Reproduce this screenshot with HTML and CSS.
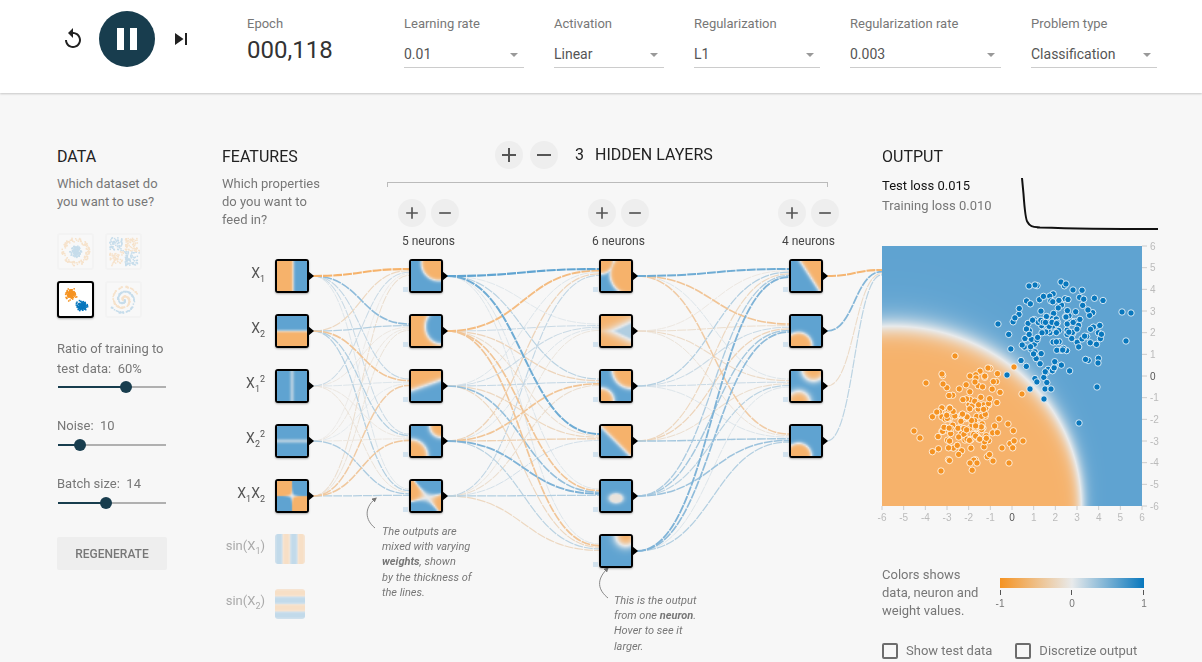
FILE: index.html
```html
<!DOCTYPE html>
<html lang="en">
  <head>
    <title>Neural Network Playground</title>
    <meta charset="UTF-8" />
    <link rel="stylesheet" href="styles.css">
  </head>
  <body>
    <header class="top-bar">
      <div class="player">
        <svg class="player-icon" viewBox="0 0 24 24"><path d="M12 5V1L7 6l5 5V7c3.31 0 6 2.69 6 6s-2.69 6-6 6-6-2.69-6-6H4c0 4.42 3.58 8 8 8s8-3.58 8-8-3.58-8-8-8z"/></svg>
        <div class="play-btn"><span class="pause-bar"></span><span class="pause-bar"></span></div>
        <svg class="player-icon" viewBox="0 0 24 24"><path d="M6 18l8.5-6L6 6v12zM16 6v12h2V6h-2z"/></svg>
      </div>
      <div class="epoch">
        <div class="epoch-label">Epoch</div>
        <div class="epoch-value">000,118</div>
      </div>
      <div class="selects">
        <div class="select select-lr"><label>Learning rate</label><div class="select-value">0.01</div></div>
        <div class="select select-act"><label>Activation</label><div class="select-value">Linear</div></div>
        <div class="select select-reg"><label>Regularization</label><div class="select-value">L1</div></div>
        <div class="select select-rate"><label>Regularization rate</label><div class="select-value">0.003</div></div>
        <div class="select select-reg"><label>Problem type</label><div class="select-value">Classification</div></div>
      </div>
    </header>

    <main class="main">
      <section class="col-data">
        <h4>DATA</h4>
        <p class="hint">Which dataset do<br>you want to use?</p>
        <div class="datasets">
          <canvas class="thumb" id="thumb-circle" width="33" height="33"></canvas>
          <canvas class="thumb" id="thumb-xor" width="33" height="33"></canvas>
          <canvas class="thumb selected" id="thumb-gauss" width="33" height="33"></canvas>
          <canvas class="thumb" id="thumb-spiral" width="33" height="33"></canvas>
        </div>
        <div class="slider-label slider-label-first">Ratio of training to<br>test data:&nbsp; 60%</div>
        <div class="slider"><div class="slider-fill" style="width: 63%"></div></div>
        <div class="slider-label">Noise:&nbsp; 10</div>
        <div class="slider"><div class="slider-fill" style="width: 20%"></div></div>
        <div class="slider-label">Batch size:&nbsp; 14</div>
        <div class="slider"><div class="slider-fill" style="width: 44%"></div></div>
        <button type="button" class="regenerate">REGENERATE</button>
      </section>

      <section class="col-network">
        <div class="net-top">
          <div class="features-intro">
            <h4>FEATURES</h4>
            <p class="hint">Which properties<br>do you want to<br>feed in?</p>
          </div>
          <div class="hidden-top">
            <div class="hidden-title">
              <div class="round-btn"><svg class="icon-big" viewBox="0 0 24 24"><path d="M19 13h-6v6h-2v-6H5v-2h6V5h2v6h6v2z"/></svg></div>
              <div class="round-btn"><svg class="icon-big" viewBox="0 0 24 24"><path d="M19 13H5v-2h14v2z"/></svg></div>
              <h4 class="layers-count">3</h4>
              <h4>HIDDEN LAYERS</h4>
            </div>
            <div class="bracket"></div>
            <div class="layer-heads">
              <div class="layer-head">
                <div class="layer-btns">
                  <div class="round-btn"><svg class="icon-small" viewBox="0 0 24 24"><path d="M19 13h-6v6h-2v-6H5v-2h6V5h2v6h6v2z"/></svg></div>
                  <div class="round-btn"><svg class="icon-small" viewBox="0 0 24 24"><path d="M19 13H5v-2h14v2z"/></svg></div>
                </div>
                <div class="neuron-count">5 neurons</div>
              </div>
              <div class="layer-head">
                <div class="layer-btns">
                  <div class="round-btn"><svg class="icon-small" viewBox="0 0 24 24"><path d="M19 13h-6v6h-2v-6H5v-2h6V5h2v6h6v2z"/></svg></div>
                  <div class="round-btn"><svg class="icon-small" viewBox="0 0 24 24"><path d="M19 13H5v-2h14v2z"/></svg></div>
                </div>
                <div class="neuron-count">6 neurons</div>
              </div>
              <div class="layer-head">
                <div class="layer-btns">
                  <div class="round-btn"><svg class="icon-small" viewBox="0 0 24 24"><path d="M19 13h-6v6h-2v-6H5v-2h6V5h2v6h6v2z"/></svg></div>
                  <div class="round-btn"><svg class="icon-small" viewBox="0 0 24 24"><path d="M19 13H5v-2h14v2z"/></svg></div>
                </div>
                <div class="neuron-count">4 neurons</div>
              </div>
            </div>
          </div>
        </div>
        <div class="diagram" id="diagram">
          <svg class="links" id="links" width="660" height="416">
            <defs>
              <marker id="arrow-head" markerWidth="5" markerHeight="5" refX="2.500" refY="2.500" orient="auto"><path d="M0 0L5 2.500L0 5z" fill="#777"/></marker>
            </defs>
          </svg>
          <svg class="links" width="660" height="416">
            <path class="callout-arrow" d="M153 282C143 274 142 262 153 253"/>
            <path class="callout-arrow" d="M386 352C376 344 374 334 385 323"/>
          </svg>
          <div class="callout callout-weights">The outputs are<br>mixed with varying<br><b>weights</b>, shown<br>by the thickness of<br>the lines.</div>
          <div class="callout callout-neuron">This is the output<br>from one <b>neuron</b>.<br>Hover to see it<br>larger.</div>
        </div>
      </section>

      <section class="col-output">
        <h4>OUTPUT</h4>
        <div class="loss-row">
          <div class="loss-text">
            <div class="loss-test">Test loss 0.015</div>
            <div class="loss-train">Training loss 0.010</div>
          </div>
          <svg class="loss-chart" width="138" height="70"><path d="M2 2L3.500 18C4.500 32 5.500 44 7.500 46C9.500 50 12 51 20 51.500C50 52.500 90 53 138 53" fill="none" stroke="#111" stroke-width="2"/></svg>
        </div>
        <div class="plot">
          <canvas id="heatmap" width="260" height="260"></canvas>
          <svg class="plot-overlay" id="plot-overlay" width="300" height="290"></svg>
        </div>
        <div class="legend">
          <div class="legend-text">Colors shows<br>data, neuron and<br>weight values.</div>
          <svg class="legend-scale" width="168" height="54">
            <defs>
              <linearGradient id="scale-gradient">
                <stop offset="0" stop-color="#f59322"/>
                <stop offset="0.5" stop-color="#e8eaeb"/>
                <stop offset="1" stop-color="#0877bd"/>
              </linearGradient>
            </defs>
            <rect x="8" y="13" width="144" height="10" fill="url(#scale-gradient)"/>
            <path d="M8.500 25v5M79.500 25v5M151.500 25v5" stroke="#555"/>
            <text x="8" y="42" text-anchor="middle">-1</text>
            <text x="80" y="42" text-anchor="middle">0</text>
            <text x="152" y="42" text-anchor="middle">1</text>
          </svg>
        </div>
        <div class="checks">
          <label class="check"><span class="check-box"></span>Show test data</label>
          <label class="check"><span class="check-box"></span>Discretize output</label>
        </div>
      </section>
    </main>
    <script src="script.js"></script>
  </body>
</html>
```

FILE: styles.css
```css
* {
  box-sizing: border-box;
}

html, body {
  margin: 0;
  height: 100%;
  overflow: hidden;
}

body {
  font-family: Roboto, "Liberation Sans", sans-serif;
  background-color: #f7f7f7;
  color: #777;
  font-size: 13px;
}

h4 {
  margin: 0;
  font-size: 16px;
  font-weight: 400;
  line-height: 22px;
  color: #222;
}

.hint {
  margin: 7px 0 0;
  line-height: 18px;
  font-size: 13px;
  color: #777;
}

/* top bar */
.top-bar {
  display: flex;
  height: 93px;
  padding-left: 61px;
  background-color: white;
  box-shadow: 0 1px 2px rgba(0, 0, 0, 0.2);
}

.player {
  display: flex;
  align-items: flex-start;
  gap: 14px;
  padding-top: 11px;
}

.player-icon {
  width: 24px;
  height: 24px;
  margin-top: 16px;
  fill: #212121;
}

.play-btn {
  display: flex;
  justify-content: center;
  align-items: center;
  gap: 6px;
  width: 56px;
  height: 56px;
  border-radius: 50%;
  background-color: #183d4e;
}

.pause-bar {
  width: 7px;
  height: 22px;
  background-color: white;
}

.epoch {
  width: 157px;
  margin-left: 54px;
  padding-top: 16px;
}

.epoch-label {
  font-size: 13px;
  line-height: 16px;
}

.epoch-value {
  margin-top: 3px;
  font-size: 24px;
  line-height: 30px;
  color: #333;
}

.selects {
  display: flex;
  gap: 30px;
  padding-top: 16px;
}

.select {
  width: 126px;
}

.select-lr {
  width: 120px;
}

.select-act {
  width: 110px;
}

.select-rate {
  width: 151px;
}

.select label {
  display: block;
  font-size: 13px;
  line-height: 16px;
}

.select-value {
  position: relative;
  height: 29px;
  margin-top: 7px;
  border-bottom: 1px solid #ccc;
  font-size: 14px;
  line-height: 30px;
  color: #555;
}

.select-value::after {
  content: "";
  position: absolute;
  right: 6px;
  top: 14px;
  border-top: 4px solid #999;
  border-left: 4px solid transparent;
  border-right: 4px solid transparent;
}

/* columns */
.main {
  display: flex;
  padding: 53px 0 0 57px;
}

.col-data {
  width: 165px;
}

.datasets {
  display: grid;
  grid-template-columns: 37px 37px;
  gap: 11px;
  margin-top: 22px;
}

.thumb {
  width: 37px;
  height: 37px;
  border: 2px solid #e6e6e6;
  border-radius: 3px;
  background-color: white;
  opacity: 0.2;
}

.thumb.selected {
  border: 2.5px solid black;
  opacity: 1;
  box-shadow: 0 1px 2px rgba(0, 0, 0, 0.3);
}

.slider-label {
  line-height: 20px;
}

.slider-label-first {
  margin-top: 21px;
  margin-bottom: -1px;
}

.slider {
  position: relative;
  width: 108px;
  height: 2px;
  margin: 8px 0 28px 1px;
  background-color: #b0b0b0;
}

.slider-fill {
  position: relative;
  height: 2px;
  background-color: #183d4e;
}

.slider-fill::after {
  content: "";
  position: absolute;
  right: -6px;
  top: -5px;
  width: 12px;
  height: 12px;
  border-radius: 50%;
  background-color: #183d4e;
}

.regenerate {
  display: block;
  width: 110px;
  height: 33px;
  margin-top: 33px;
  border: 0;
  border-radius: 2px;
  background-color: #eee;
  font-family: inherit;
  font-size: 12px;
  font-weight: 500;
  color: #777;
}

.col-network {
  width: 660px;
}

.net-top {
  display: flex;
  height: 100px;
}

.features-intro {
  width: 165px;
}

.hidden-top {
  width: 495px;
  margin-top: -5px;
}

.hidden-title {
  display: flex;
  align-items: center;
  gap: 7px;
  padding-left: 108px;
}

.layers-count {
  margin: 0 4px 0 10px;
}

.round-btn {
  display: flex;
  justify-content: center;
  align-items: center;
  width: 28px;
  height: 28px;
  border-radius: 50%;
  background-color: #eee;
  fill: #555;
}

.icon-big {
  width: 24px;
  height: 24px;
}

.icon-small {
  width: 20px;
  height: 20px;
}

.bracket {
  width: 441px;
  height: 5px;
  margin-top: 13px;
  border: 1px solid #bbb;
  border-bottom: 0;
}

.layer-heads {
  display: flex;
  margin-top: 12px;
  padding-left: 11px;
}

.layer-head {
  flex: 0 0 190px;
}

.layer-btns {
  display: flex;
  gap: 5px;
}

.neuron-count {
  margin: 7px 0 0 4px;
  font-size: 12px;
  line-height: 14px;
  color: #444;
}

/* network diagram */
.diagram {
  position: relative;
  height: 416px;
}

.links {
  position: absolute;
  left: 0;
  top: 0;
  overflow: visible;
}

.callout-arrow {
  fill: none;
  stroke: #888;
  stroke-width: 1;
  marker-end: url(#arrow-head);
}

.node {
  position: absolute;
  width: 34px;
  height: 34px;
  border: 2px solid black;
  border-radius: 3px;
  background-color: white;
  box-shadow: 0 1px 2px rgba(0, 0, 0, 0.3);
}

.node canvas {
  display: block;
  width: 30px;
  height: 30px;
  border-radius: 1px;
}

.node::after {
  content: "";
  position: absolute;
  left: 31px;
  top: 10px;
  border-left: 6px solid black;
  border-top: 5px solid transparent;
  border-bottom: 5px solid transparent;
}

.node.off {
  width: 30px;
  height: 30px;
  border: 0;
  box-shadow: none;
  background-color: transparent;
}

.node.off::after {
  display: none;
}

.node.off canvas {
  border-radius: 3px;
  opacity: 0.35;
}

.node-label {
  position: absolute;
  right: 100%;
  top: 2px;
  margin-right: 12px;
  white-space: nowrap;
  font-size: 14px;
  line-height: 20px;
  color: #555;
}

.node.off .node-label {
  top: 2px;
  right: 30px;
  margin-right: 10px;
  font-size: 13px;
  color: #aaa;
}

.node-label sub,
.node-label sup {
  font-size: 9px;
  line-height: 0;
}

.bias {
  position: absolute;
  left: -8px;
  top: 26px;
  width: 5px;
  height: 5px;
  background-color: #d2e2ee;
}

.callout {
  position: absolute;
  font-size: 11px;
  font-style: italic;
  line-height: 15.200px;
  white-space: nowrap;
  color: #777;
}

.callout b {
  font-weight: 700;
}

.callout-weights {
  left: 160px;
  top: 278px;
}

.callout-neuron {
  left: 392px;
  top: 347px;
}

/* output */
.col-output {
  width: 320px;
}

.loss-row {
  display: flex;
  justify-content: space-between;
  width: 276px;
  height: 70px;
  margin-top: 8px;
}

.loss-text {
  font-size: 13px;
  line-height: 20px;
}

.loss-test {
  color: #111;
}

.loss-chart {
  display: block;
}

.plot {
  position: relative;
  width: 260px;
  height: 260px;
}

#heatmap {
  display: block;
}

.plot-overlay {
  position: absolute;
  left: 0;
  top: 0;
  overflow: visible;
}

.plot-overlay text {
  font-family: "Liberation Sans", sans-serif;
  font-size: 10px;
  fill: #bbb;
}

.plot-overlay text.zero {
  fill: #555;
}

.legend {
  display: flex;
  margin-top: 60px;
}

.legend-text {
  width: 110px;
  font-size: 13px;
  line-height: 18px;
}

.legend-scale {
  margin-top: -1px;
}

.legend-scale text {
  font-family: "Liberation Sans", sans-serif;
  font-size: 10px;
  fill: #777;
}

.checks {
  display: flex;
  gap: 23px;
  margin-top: 22px;
}

.check {
  display: flex;
  align-items: center;
  gap: 8px;
  font-size: 13px;
  line-height: 18px;
}

.check-box {
  width: 16px;
  height: 16px;
  border: 2px solid #6d6d6d;
  border-radius: 2px;
}
```

FILE: script.js
```js
var PALE = [232, 234, 235];
var ORANGE = [246, 178, 107];
var BLUE = [95, 163, 209];
var SVG_NS = 'http://www.w3.org/2000/svg';

var seed = 7;
function rnd() {
  seed = (seed * 16807) % 2147483647;
  return seed / 2147483647;
}
function gauss() {
  return Math.sqrt(-2 * Math.log(rnd())) * Math.cos(2 * Math.PI * rnd());
}

function scaleColor(t) {
  var end = t < 0 ? ORANGE : BLUE;
  var a = Math.min(1, Math.abs(t));
  return [0, 1, 2].map(function (i) {
    return Math.round(PALE[i] + (end[i] - PALE[i]) * a);
  });
}

// blue outside the blobs, orange inside
function blobs(list, k) {
  return function (x, y) {
    var d = 9;
    list.forEach(function (b) {
      d = Math.min(d, Math.hypot(x - b[0], y - b[1]) - b[2]);
    });
    return Math.tanh(k * d);
  };
}

function drawHeat(canvas, fn) {
  var ctx = canvas.getContext('2d');
  var w = canvas.width, h = canvas.height;
  var img = ctx.createImageData(w, h);
  for (var j = 0; j < h; j++) {
    for (var i = 0; i < w; i++) {
      var x = (i + 0.5) / w * 2 - 1;
      var y = 1 - (j + 0.5) / h * 2;
      var c = scaleColor(fn(x, y));
      var p = (j * w + i) * 4;
      img.data[p] = c[0];
      img.data[p + 1] = c[1];
      img.data[p + 2] = c[2];
      img.data[p + 3] = 255;
    }
  }
  ctx.putImageData(img, 0, 0);
}

var inputs = [
  { label: 'X<sub>1</sub>', fn: function (x, y) { return Math.tanh(12 * (x - 0.08)); } },
  { label: 'X<sub>2</sub>', fn: function (x, y) { return Math.tanh(12 * y); } },
  { label: 'X<sub>1</sub><sup>2</sup>', fn: function (x, y) { return 0.4 + 0.6 * Math.tanh(40 * x * x); } },
  { label: 'X<sub>2</sub><sup>2</sup>', fn: function (x, y) { return 0.4 + 0.6 * Math.tanh(40 * y * y); } },
  { label: 'X<sub>1</sub>X<sub>2</sub>', fn: function (x, y) { return Math.tanh(60 * x * y); } },
  { label: 'sin(X<sub>1</sub>)', off: true, fn: function (x, y) { return Math.tanh(3 * Math.sin(2 * Math.PI * x)); } },
  { label: 'sin(X<sub>2</sub>)', off: true, fn: function (x, y) { return Math.tanh(3 * Math.sin(2 * Math.PI * y)); } }
];

var hidden = [
  [
    blobs([[0.85, 0.85, 1.15]], 8),
    function (x, y) { return -Math.tanh(7 * (Math.hypot(x - 1, (y - 0.3) * 0.9) - 1.05)); },
    function (x, y) { return Math.tanh(5 * (0.35 * x - y + 0.05)); },
    blobs([[1, 1, 0.75], [-1, -1, 1.1]], 6),
    function (x, y) {
      var a = (x - 0.1) + 0.8 * (y + 0.1);
      var b = (y + 0.1) - 0.25 * (x - 0.1);
      return Math.tanh(9 * a * b);
    }
  ],
  [
    blobs([[-1, 1, 0.85], [1, 0.15, 1.4]], 7),
    function (x, y) { return Math.min(0.4, -Math.tanh(1.5 * (1.5 * Math.abs(y) - 0.7 * (x + 0.3)))); },
    blobs([[1, 1.1, 1.25], [-1, -1, 0.85]], 6),
    function (x, y) { return Math.tanh(-5 * (x + y + 0.05)); },
    function (x, y) { return Math.max(-0.12, Math.tanh(2.5 * (Math.hypot(x / 0.5, (y + 0.15) / 0.35) - 0.8))); },
    blobs([[0.65, 1, 0.65]], 3)
  ],
  [
    function (x, y) { return Math.tanh(-6 * (x + 0.65 * y - 0.25)); },
    blobs([[-0.5, -1, 0.9]], 7),
    blobs([[0.5, 1.1, 0.75], [-0.5, -1.1, 0.75]], 4),
    blobs([[-0.5, -1, 0.85]], 7)
  ]
];

// positive is blue, negative is orange
var weights = [
  [
    [-0.9, 0.6, 0.25, 0.2, 0.1],
    [-0.3, 0.35, -0.6, 0.35, 0.35],
    [0.2, -0.1, 0.1, -0.1, -0.15],
    [-0.05, -0.1, 0.05, -0.1, 0.4],
    [-0.2, -0.15, -0.5, -0.55, 0.35]
  ],
  [
    [0.9, 0.08, 0.3, 0.8, 0.1, 0.1],
    [-0.75, 0.2, -0.35, -0.2, -0.6, -0.6],
    [0.1, 0.2, 0.25, -0.3, 0.55, -0.3],
    [-0.35, 0.1, -0.6, -0.4, 0.7, 0.3],
    [0.25, -0.12, -0.2, 0.15, 0.35, -0.3]
  ],
  [
    [0.8, -0.6, 0.1, -0.5],
    [-0.1, -0.2, -0.25, -0.15],
    [0.35, 0.2, 0.2, 0.1],
    [-0.3, -0.35, -0.2, 0.45],
    [0.4, 0.45, 0.3, 0.5],
    [0.7, 0.6, 0.1, 0.35]
  ],
  [[-0.85], [0.65], [-0.25], [0.3]]
];

var diagram = document.getElementById('diagram');
var links = document.getElementById('links');
var columnX = [53, 187, 377, 567];
var ROW = 55, TOP = 13;

function addNode(colIndex, rowIndex, fn, opts) {
  var node = document.createElement('div');
  node.className = 'node' + (opts.off ? ' off' : '');
  node.style.left = columnX[colIndex] + 'px';
  node.style.top = (TOP + rowIndex * ROW) + 'px';
  var canvas = document.createElement('canvas');
  // low resolution, the browser smooths it when it scales up
  canvas.width = 20;
  canvas.height = 20;
  node.appendChild(canvas);
  drawHeat(canvas, fn);
  if (opts.label) {
    var label = document.createElement('div');
    label.className = 'node-label';
    label.innerHTML = opts.label;
    node.appendChild(label);
  }
  if (colIndex > 0) {
    var bias = document.createElement('div');
    bias.className = 'bias';
    node.appendChild(bias);
  }
  diagram.appendChild(node);
}

inputs.forEach(function (input, i) {
  addNode(0, i, input.fn, { label: input.label, off: input.off });
});
hidden.forEach(function (layer, c) {
  layer.forEach(function (fn, r) {
    addNode(c + 1, r, fn, {});
  });
});

function addLink(x0, y0, x1, y1, w) {
  var mid = (x0 + x1) / 2;
  var path = document.createElementNS(SVG_NS, 'path');
  path.setAttribute('d', 'M' + x0 + ' ' + y0 + 'C' + mid + ' ' + y0 + ' ' + mid + ' ' + y1 + ' ' + x1 + ' ' + y1);
  path.setAttribute('fill', 'none');
  path.setAttribute('stroke', 'rgb(' + scaleColor(w * 1.1).join(',') + ')');
  path.setAttribute('stroke-width', (0.7 + Math.abs(w) * 1.6).toFixed(2));
  path.setAttribute('stroke-dasharray', '9,1');
  links.appendChild(path);
}

weights.forEach(function (matrix, c) {
  var x0 = columnX[c] + 38;
  var x1 = c < 3 ? columnX[c + 1] : 660;
  var list = [];
  matrix.forEach(function (row, from) {
    row.forEach(function (w, to) {
      list.push([from, to, w]);
    });
  });
  // weak links first so the strong ones stay on top
  list.sort(function (a, b) { return Math.abs(a[2]) - Math.abs(b[2]); });
  list.forEach(function (l) {
    var y0 = TOP + l[0] * ROW + 17;
    var y1 = c < 3 ? TOP + l[1] * ROW + 10 + l[0] * 1.6 : 24 + l[0] * 1.6;
    addLink(x0, y0, x1, y1, l[2]);
  });
});

// output plot
function outputFn(x, y) {
  var px = x * 6, py = y * 6;
  var d = Math.sqrt(Math.pow((px + 5.5) / 8.7, 2) + Math.pow((py + 6) / 8.3, 2)) - 1;
  return Math.tanh(d * (16 - py * 1.4));
}
drawHeat(document.getElementById('heatmap'), outputFn);

var overlay = document.getElementById('plot-overlay');
function svgEl(name, attrs, text) {
  var el = document.createElementNS(SVG_NS, name);
  Object.keys(attrs).forEach(function (k) { el.setAttribute(k, attrs[k]); });
  if (text !== undefined) el.textContent = text;
  overlay.appendChild(el);
  return el;
}

for (var v = -6; v <= 6; v++) {
  var pos = (v + 6) / 12 * 260;
  svgEl('path', { d: 'M' + pos + ' 260v4', stroke: '#ccc' });
  svgEl('path', { d: 'M260 ' + (260 - pos) + 'h5', stroke: '#ccc' });
  svgEl('text', { x: pos, y: 275, 'text-anchor': 'middle', 'class': v === 0 ? 'zero' : '' }, String(v));
  svgEl('text', { x: 268, y: 260 - pos + 3.5, 'class': v === 0 ? 'zero' : '' }, String(v));
}

function addDot(px, py, color) {
  svgEl('circle', { cx: px, cy: py, r: 3.2, fill: color, stroke: '#fff', 'stroke-opacity': 0.8, 'stroke-width': 1 });
}

function addCluster(cx, cy, n, color) {
  for (var i = 0; i < n; i++) {
    var gx = gauss() * 1.15, gy = gauss() * 1.15;
    if (Math.hypot(gx, gy) > 2.6) continue;
    addDot((cx + gx + 6) / 12 * 260, (6 - cy - gy) / 12 * 260, color);
  }
}

addCluster(-2, -2, 150, '#f59322');
addCluster(2.1, 2.1, 150, '#0877bd');

// the stragglers, in page pixels
[[955, 356], [988, 368], [942, 374], [926, 383], [943, 384], [970, 376], [976, 378], [975, 382], [914, 431],
 [920, 438], [1023, 441], [1009, 463], [1014, 367], [1022, 394], [1008, 424], [1002, 448], [941, 471],
 [970, 463], [977, 463], [993, 461]].forEach(function (p) {
  addDot(p[0] - 882, p[1] - 246, '#f59322');
});
[[1079, 423], [1097, 387], [1098, 363], [1044, 399], [1045, 389], [1051, 389], [1030, 389], [1007, 375],
 [1126, 341], [1122, 312], [1131, 313], [998, 324], [1061, 282], [1066, 284], [1035, 285], [1029, 286],
 [1073, 290]].forEach(function (p) {
  addDot(p[0] - 882, p[1] - 246, '#0877bd');
});

// dataset thumbnails
function thumbDots(id, gen) {
  var ctx = document.getElementById(id).getContext('2d');
  for (var i = 0; i < 260; i++) {
    var d = gen(i);
    ctx.fillStyle = d[2] > 0 ? '#0877bd' : '#f59322';
    ctx.fillRect(d[0], d[1], 1.5, 1.5);
  }
}

thumbDots('thumb-circle', function (i) {
  var a = rnd() * 6.283, blue = i % 2 === 0;
  var r = blue ? rnd() * 6 : 10 + rnd() * 4;
  return [16 + r * Math.cos(a), 16 + r * Math.sin(a), blue ? 1 : -1];
});
thumbDots('thumb-xor', function () {
  var x = 2 + rnd() * 28, y = 2 + rnd() * 28;
  if (Math.abs(x - 16) < 1.5 || Math.abs(y - 16) < 1.5) x += 3;
  return [x, y, (x - 16) * (y - 16) > 0 ? 1 : -1];
});
thumbDots('thumb-gauss', function (i) {
  var blue = i % 2 === 0;
  return [(blue ? 22 : 11) + gauss() * 2.2, (blue ? 22 : 11) + gauss() * 2.2, blue ? 1 : -1];
});
thumbDots('thumb-spiral', function (i) {
  var blue = i % 2 === 0;
  var s = rnd();
  var a = s * 9 + (blue ? 0 : Math.PI);
  var r = s * 14 + rnd();
  return [16 + r * Math.cos(a), 16 + r * Math.sin(a), blue ? 1 : -1];
});
```
